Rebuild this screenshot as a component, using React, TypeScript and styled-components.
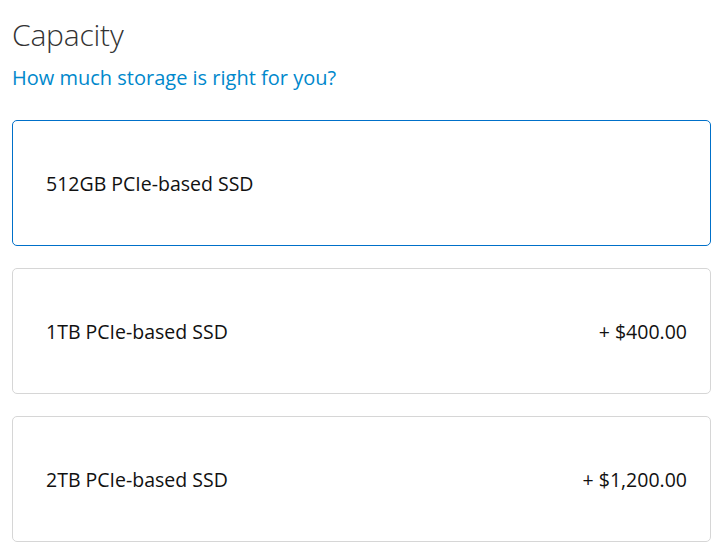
import React from "react";
import styled, { createGlobalStyle } from "styled-components";

const GlobalStyle = createGlobalStyle`
  body {
    margin: 0;
    background: #ffffff;
    font-family: "Open Sans", "Noto Sans", sans-serif;
  }
`;

const Page = styled.div`
  padding: 14px 9px 0 12px;
`;

const Title = styled.h2`
  margin: 0;
  font-size: 30px;
  font-weight: 300;
  color: #333333;
  line-height: 42px;
  letter-spacing: -0.2px;
`;

const Subtitle = styled.a`
  display: block;
  margin-top: 8px;
  font-size: 20px;
  color: #0088cc;
  line-height: 28px;
  text-decoration: none;
`;

const Options = styled.div`
  margin-top: 28px;
  display: flex;
  flex-direction: column;
  gap: 22px;
`;

const Option = styled.div<{ $selected?: boolean }>`
  height: 126px;
  box-sizing: border-box;
  border: 1px solid ${({ $selected }) => ($selected ? "#0070c9" : "#d6d6d6")};
  border-radius: 5px;
  display: flex;
  align-items: center;
  justify-content: space-between;
  padding: 0 23px 0 33px;
  font-size: 19.5px;
  color: #111111;
`;

const Label = styled.span``;

const Price = styled.span``;

const options = [
  { label: "512GB PCIe-based SSD", price: "", selected: true },
  { label: "1TB PCIe-based SSD", price: "+ $400.00" },
  { label: "2TB PCIe-based SSD", price: "+ $1,200.00" },
];

export default function App() {
  return (
    <>
      <GlobalStyle />
      <Page>
        <Title>Capacity</Title>
        <Subtitle href="#">How much storage is right for you?</Subtitle>
        <Options>
          {options.map((o) => (
            <Option key={o.label} $selected={o.selected}>
              <Label>{o.label}</Label>
              {o.price && <Price>{o.price}</Price>}
            </Option>
          ))}
        </Options>
      </Page>
    </>
  );
}
